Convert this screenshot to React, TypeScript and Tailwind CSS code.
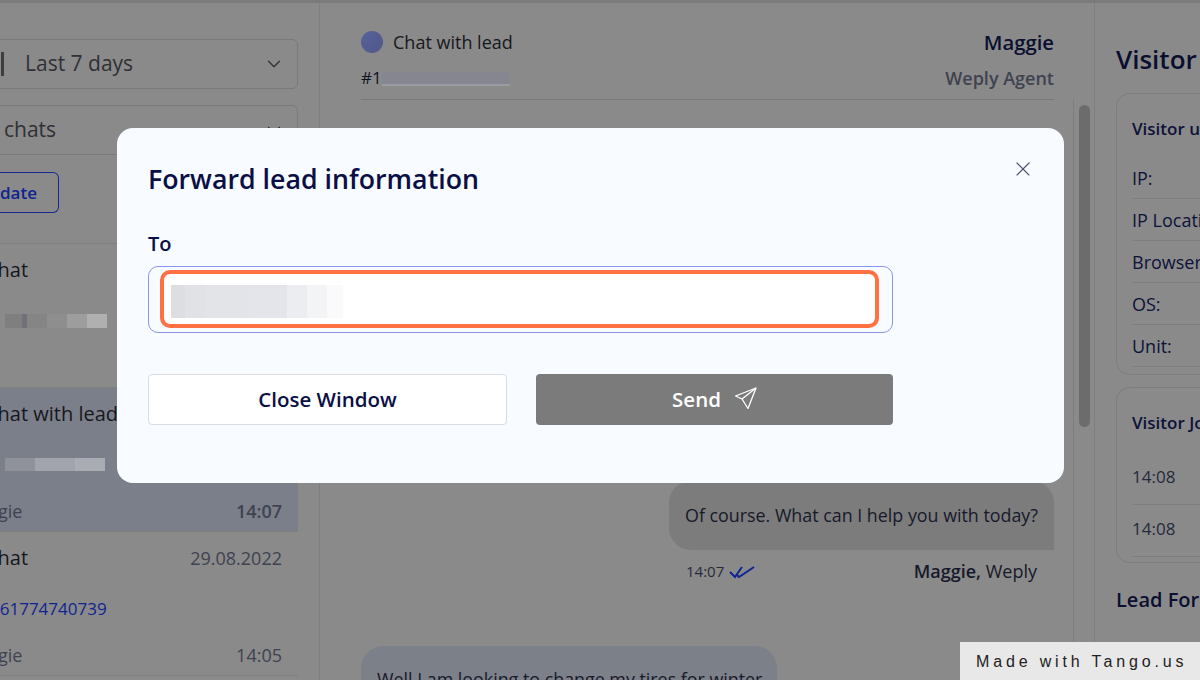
import { ChevronDown, X } from "lucide-react";

const font = { fontFamily: '"Open Sans", "Noto Sans", sans-serif' };

function BlurBlocks({ shades, height }: { shades: [string, number][]; height: string }) {
  return (
    <div className={`flex ${height}`}>
      {shades.map(([color, width], i) => (
        <div key={i} style={{ backgroundColor: color, width }} />
      ))}
    </div>
  );
}

function ChatItem({
  title,
  date,
  agent,
  time,
  number,
  active,
}: {
  title: string;
  date?: string;
  agent?: string;
  time?: string;
  number: React.ReactNode;
  active?: boolean;
}) {
  return (
    <div className={`h-[144px] border-b border-[#7f7f7f] pr-4 ${active ? "bg-[#7b7f8a]" : ""}`}>
      <div className="flex h-[39px] items-end justify-between">
        <span className="-ml-[15px] text-[20px] leading-[26px] text-[#17171c]">{title}</span>
        {date && <span className="text-[18px] leading-[26px] text-[#3f4250]">{date}</span>}
      </div>
      <div className="mt-[26px] h-[24px]">{number}</div>
      <div className="mt-[23px] flex items-center justify-between">
        <span className="-ml-[38px] text-[18px] leading-[22px] text-[#3f4250]">{agent}</span>
        <span className={`text-[18px] leading-[22px] text-[#3f4250] ${active ? "font-semibold" : ""}`}>{time}</span>
      </div>
    </div>
  );
}

function VisitorRow({ label }: { label: string }) {
  return (
    <div className="h-[42px] border-b border-[#7e7e7e] pt-[9px] text-[18px] font-medium leading-[24px] text-[#0d1238]">
      {label}
    </div>
  );
}

function JourneyRow() {
  return <div className="h-[52px] border-b border-[#7e7e7e] pt-[12px] text-[17px] leading-[24px] text-[#262a3a]">14:08</div>;
}

export default function App() {
  return (
    <div className="relative h-[680px] w-[1200px] overflow-hidden bg-[#8a8a8a]" style={font}>
      <div className="flex h-full border-t-[3px] border-[#7b7b7b]">
        {/* chat list */}
        <div className="h-full w-[320px] shrink-0 border-r border-[#7f7f7f] pr-[21px]">
          <div className="mt-[36px] -ml-[20px] flex h-[50px] items-center justify-between rounded-md border border-[#7a7a7a] pr-[12px] pl-[20px]">
            <div className="flex items-center">
              <div className="h-[24px] w-[3px] bg-[#3d3d3d]" />
              <span className="ml-[21px] text-[21px] font-medium text-[#303036]">Last 7 days</span>
            </div>
            <ChevronDown size={22} strokeWidth={1.25} className="text-[#2d2d33]" />
          </div>
          <div className="mt-[16px] -ml-[20px] flex h-[50px] items-center justify-between rounded-md border border-[#7a7a7a] pr-[12px] pl-[23px]">
            <span className="text-[21px] font-medium text-[#303036]">chats</span>
            <ChevronDown size={22} strokeWidth={1.25} className="text-[#2d2d33]" />
          </div>
          <div className="mt-[17px] flex h-[41px] w-[59px] items-center justify-end rounded-r-md border border-l-0 border-[#17298c] pr-[21px]">
            <span className="text-[17px] font-semibold text-[#0f2490]">date</span>
          </div>
          <div className="mt-[30px] border-t border-[#7f7f7f]">
            <ChatItem
              title="Chat"
              number={
                <div className="ml-[5px] pt-[5px]">
                  <BlurBlocks height="h-[14px]" shades={[["#7f7f7f", 17], ["#6f7176", 5], ["#858585", 20], ["#8e8e8e", 20], ["#9d9d9d", 20], ["#b0b0b0", 20]]} />
                </div>
              }
            />
            <ChatItem
              active
              title="Chat with lead"
              agent="Maggie"
              time="14:07"
              number={
                <div className="ml-[5px] pt-[5px]">
                  <BlurBlocks height="h-[13px]" shades={[["#8f929b", 30], ["#a2a4ad", 40], ["#aaacb4", 30]]} />
                </div>
              }
            />
            <ChatItem
              title="Chat"
              date="29.08.2022"
              agent="Maggie"
              time="14:05"
              number={<span className="-ml-[10px] text-[17px] font-medium leading-[24px] text-[#0f2490]">161774740739</span>}
            />
          </div>
        </div>

        {/* conversation */}
        <div className="flex h-full w-[775px] shrink-0 border-r border-[#7f7f7f] pl-[41px]">
          <div className="w-[693px] shrink-0">
            <div className="h-[97px] border-b border-[#7a7a7a] pt-[28px]">
              <div className="flex h-[22px] items-center justify-between">
                <div className="flex items-center">
                  <div className="h-[22px] w-[22px] rounded-full bg-gradient-to-br from-[#55639c] to-[#515688]" />
                  <span className="ml-[10px] text-[18px] text-[#17171c]">Chat with lead</span>
                </div>
                <span className="text-[20.3px] font-semibold text-[#0a0f30]">Maggie</span>
              </div>
              <div className="mt-[13px] flex items-center justify-between">
                <div className="flex items-center">
                  <span className="text-[17px] leading-[24px] text-[#111122]">#1</span>
                  <div className="mt-[2px] h-[14px] w-[128px] border-b-2 border-[#9a9aa2] bg-[#868690]" />
                </div>
                <span className="text-[18px] font-semibold leading-[24px] text-[#3f4250]">Weply Agent</span>
              </div>
            </div>

            <div className="mt-[381px] ml-auto flex h-[69px] w-[385px] items-center rounded-[22px] rounded-br-none bg-[#7c7c7c] px-[16px] text-[17.85px] whitespace-nowrap text-[#17192a]">
              Of course. What can I help you with today?
            </div>
            <div className="mt-[8px] ml-auto flex w-[385px] items-center justify-between pr-[17px] pl-[17px]">
              <div className="flex items-center">
                <span className="text-[15px] text-[#262a3a]">14:07</span>
                <svg width="26" height="14" viewBox="0 0 26 14" fill="none" stroke="#0f2490" strokeWidth="2" className="ml-[5px]">
                  <path d="M1 7l5 5L13 2" />
                  <path d="M8 10l2 2L25 2" />
                </svg>
              </div>
              <span className="text-[18px] text-[#17192a]">
                <span className="font-semibold">Maggie,</span> Weply
              </span>
            </div>

            <div className="mt-[61px] h-[60px] w-[416px] rounded-t-[22px] bg-[#7c8088] px-[16px] pt-[20px] text-[17.85px] whitespace-nowrap text-[#17192a]">
              Well I am looking to change my tires for winter
            </div>
          </div>
          <div className="mt-[97px] ml-[19px] w-[21px] border-l border-[#7d7d7d] pl-[5px]">
            <div className="mt-[5px] h-[322px] w-[11px] rounded-full bg-[#6c6c6c]" />
          </div>
        </div>

        {/* visitor info */}
        <div className="min-w-0 flex-1 pl-[21px]">
          <div className="mt-[38px] text-[26px] font-semibold leading-[36px] whitespace-nowrap text-[#0a0f30]">Visitor Info</div>
          <div className="mt-[16px] h-[282px] w-[120px] rounded-l-[14px] border border-r-0 border-[#7e7e7e] pl-[15px]">
            <div className="mt-[23px] text-[17px] font-semibold leading-[24px] whitespace-nowrap text-[#0d1238]">Visitor user</div>
            <div className="mt-[16px] overflow-hidden whitespace-nowrap">
              <VisitorRow label="IP:" />
              <VisitorRow label="IP Location:" />
              <VisitorRow label="Browser:" />
              <VisitorRow label="OS:" />
              <VisitorRow label="Unit:" />
            </div>
          </div>
          <div className="mt-[12px] h-[176px] w-[120px] rounded-l-[14px] border border-r-0 border-[#7e7e7e] pl-[15px]">
            <div className="mt-[23px] text-[17px] font-semibold leading-[24px] whitespace-nowrap text-[#0d1238]">Visitor Journey</div>
            <div className="mt-[18px]">
              <JourneyRow />
              <JourneyRow />
            </div>
          </div>
          <div className="mt-[23px] text-[20px] font-semibold leading-[28px] whitespace-nowrap text-[#0a0f30]">Lead Form</div>
        </div>
      </div>

      {/* modal */}
      <div className="absolute top-[128px] left-[117px] h-[355px] w-[947px] rounded-2xl bg-[#f8fbff] pt-[32px] pr-[171px] pl-[31px]">
        <button className="absolute top-[29px] right-[29px] text-[#4f5370]">
          <X size={24} strokeWidth={1.1} />
        </button>
        <h2 className="text-[26.75px] font-semibold leading-[38px] text-[#0a0f45]">Forward lead information</h2>
        <div className="mt-[33px] text-[20px] font-semibold leading-[26px] text-[#0a0f45]">To</div>
        <div className="mt-[9px] h-[67px] rounded-[10px] border border-[#8a94ee] bg-[#f8fbff] pt-[3px] pr-[13px] pl-[11px]">
          <div className="h-[58px] rounded-[10px] border-[4px] border-[#ff7043] bg-white pt-[11px] pl-[7px]">
            <BlurBlocks
              height="h-[33px]"
              shades={[["#dcdee2", 14], ["#e0e2e6", 20], ["#e2e4e8", 42], ["#e3e5ea", 40], ["#ecedf0", 20], ["#f3f4f6", 20], ["#fafafb", 16]]}
            />
          </div>
        </div>
        <div className="mt-[41px] flex gap-[29px]">
          <button className="h-[51px] flex-1 rounded-[4px] border border-[#d9dbe0] bg-white text-[20.5px] font-semibold text-[#0a0f45]">
            Close Window
          </button>
          <button className="flex h-[51px] flex-1 items-center justify-center gap-[14px] rounded-[4px] bg-[#7b7b7b] text-[20.5px] font-semibold text-white">
            Send
            <svg width="22" height="22" viewBox="0 0 22 22" fill="none" stroke="white" strokeWidth="1.3" strokeLinejoin="round" className="-mt-[3px]">
              <path d="M21 1L0.5 9l6.5 3 6 9.5z" />
              <path d="M7 12L21 1" />
            </svg>
          </button>
        </div>
      </div>

      {/* watermark */}
      <div className="absolute right-0 bottom-0 flex h-[38px] w-[240px] items-center bg-[#e8e8e8] pt-[2px] pl-[16px] text-[16px] tracking-[3.85px] whitespace-nowrap text-[#222]" style={{ fontFamily: '"Liberation Sans", sans-serif' }}>
        Made with Tango.us
      </div>
    </div>
  );
}
